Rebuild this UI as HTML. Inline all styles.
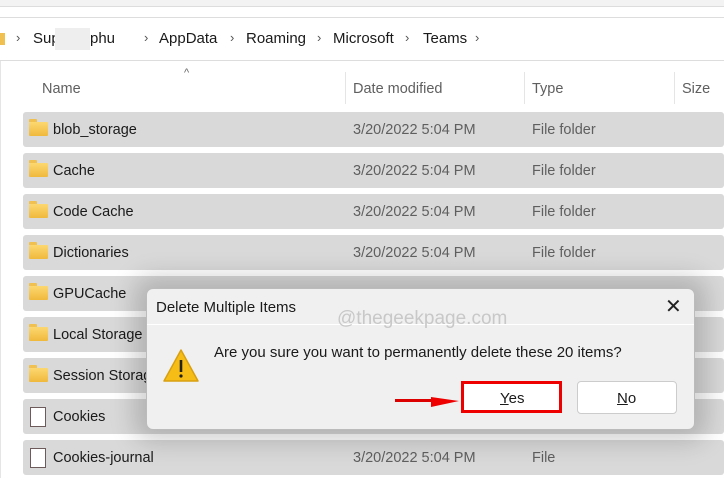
<!DOCTYPE html>
<html><head><style>
body{margin:0;width:724px;height:478px;overflow:hidden;background:#fff;font-family:"Liberation Sans",sans-serif;position:relative}
.a{position:absolute}
.row{position:absolute;left:23px;width:701px;height:35px;background:#d9d9d9;border-radius:3px;font-size:14.5px;color:#1a1a1a}
.row span{position:absolute;top:10px}
.g{color:#5f5f5f}
.fold{position:absolute;left:6px;top:10px;width:19px;height:14px;background:linear-gradient(#fcd770,#f0b93c);border-radius:1px}
.fold:before{content:"";position:absolute;left:0;top:-3px;width:8px;height:3px;background:#f0c050;border-radius:1px 1px 0 0}
.file{position:absolute;left:7px;top:8px;width:14px;height:18px;border:1px solid #6d5a5a;background:#fff}
.bc{font-size:15px;color:#1a1a1a;top:30px}
.ch{font-size:13px;color:#555;top:30px}
</style></head><body>
<div class="a" style="left:0;top:0;width:724px;height:6px;background:#f3f3f3;border-bottom:1px solid #ddd"></div>
<div class="a" style="left:0;top:17px;width:724px;height:1px;background:#ddd"></div>
<div class="a" style="left:0;top:60px;width:724px;height:1px;background:#ddd"></div>
<div class="a" style="left:0;top:33px;width:5px;height:12px;background:#f0c050"></div>
<span class="a ch" style="left:16px">›</span>
<span class="a bc" style="left:33px">Sup</span>
<div class="a" style="left:55px;top:28px;width:35px;height:22px;background:#eee"></div>
<span class="a bc" style="left:90px">phu</span>
<span class="a ch" style="left:144px">›</span><span class="a bc" style="left:159px">AppData</span>
<span class="a ch" style="left:230px">›</span><span class="a bc" style="left:246px">Roaming</span>
<span class="a ch" style="left:317px">›</span><span class="a bc" style="left:333px">Microsoft</span>
<span class="a ch" style="left:405px">›</span><span class="a bc" style="left:423px">Teams</span>
<span class="a ch" style="left:475px">›</span>
<div class="a" style="left:0;top:61px;width:1px;height:417px;background:#e5e5e5"></div>
<span class="a" style="left:184px;top:67px;font-size:11px;color:#666">^</span>
<span class="a g" style="left:42px;top:81px;font-size:14.5px">Name</span>
<div class="a" style="left:345px;top:72px;width:1px;height:32px;background:#e5e5e5"></div>
<span class="a g" style="left:353px;top:81px;font-size:14.5px">Date modified</span>
<div class="a" style="left:524px;top:72px;width:1px;height:32px;background:#e5e5e5"></div>
<span class="a g" style="left:532px;top:81px;font-size:14.5px">Type</span>
<div class="a" style="left:674px;top:72px;width:1px;height:32px;background:#e5e5e5"></div>
<span class="a g" style="left:682px;top:81px;font-size:14.5px">Size</span>

<div class="row" style="top:112px"><i class="fold"></i><span style="left:30px">blob_storage</span><span class="g" style="left:330px">3/20/2022 5:04 PM</span><span class="g" style="left:509px">File folder</span></div>
<div class="row" style="top:153px"><i class="fold"></i><span style="left:30px">Cache</span><span class="g" style="left:330px">3/20/2022 5:04 PM</span><span class="g" style="left:509px">File folder</span></div>
<div class="row" style="top:194px"><i class="fold"></i><span style="left:30px">Code Cache</span><span class="g" style="left:330px">3/20/2022 5:04 PM</span><span class="g" style="left:509px">File folder</span></div>
<div class="row" style="top:235px"><i class="fold"></i><span style="left:30px">Dictionaries</span><span class="g" style="left:330px">3/20/2022 5:04 PM</span><span class="g" style="left:509px">File folder</span></div>
<div class="row" style="top:276px"><i class="fold"></i><span style="left:30px">GPUCache</span></div>
<div class="row" style="top:317px"><i class="fold"></i><span style="left:30px">Local Storage</span></div>
<div class="row" style="top:358px"><i class="fold"></i><span style="left:30px">Session Storage</span></div>
<div class="row" style="top:399px"><i class="file"></i><span style="left:30px">Cookies</span></div>
<div class="row" style="top:440px"><i class="file"></i><span style="left:30px">Cookies-journal</span><span class="g" style="left:330px">3/20/2022 5:04 PM</span><span class="g" style="left:509px">File</span></div>

<div class="a" style="left:146px;top:288px;width:547px;height:140px;background:#f0f0f0;border:1px solid #bbb;border-radius:7px;box-shadow:0 0 25px 12px rgba(0,0,0,0.18)">
 <span class="a" style="left:9px;top:10px;font-size:15px;color:#1a1a1a">Delete Multiple Items</span>
 <span class="a" style="left:518px;top:5px;font-size:20px;color:#222">✕</span>
 <div class="a" style="left:0;top:35px;width:547px;height:1px;background:#fff"></div>
 <span class="a" style="left:190px;top:19px;font-size:19px;color:#c8c8c8">@thegeekpage.com</span>
 <svg class="a" style="left:15px;top:58px" width="38" height="38" viewBox="0 0 38 38"><path d="M19 3 L36 34 L2 34 Z" fill="#f6bd16" stroke="#d8a010" stroke-width="1.5" stroke-linejoin="round"/><rect x="17.7" y="13" width="2.6" height="12" fill="#222"/><circle cx="19" cy="29" r="1.6" fill="#222"/></svg>
 <span class="a" style="left:67px;top:55px;font-size:15px;color:#1a1a1a">Are you sure you want to permanently delete these 20 items?</span>
 <div class="a" style="left:248px;top:110px;width:50px;height:3px;background:#d00;"></div>
 <svg class="a" style="left:284px;top:102px" width="28" height="18"><path d="M0 6 L28 10 L0 16 Z" fill="#e00"/></svg>
 <div class="a" style="left:314px;top:92px;width:95px;height:26px;border:3px solid #e00;background:#fff"></div>
 <span class="a" style="left:353px;top:101px;font-size:15px;color:#1a1a1a"><u>Y</u>es</span>
 <div class="a" style="left:430px;top:92px;width:98px;height:31px;border:1px solid #ccc;border-radius:4px;background:#fff"></div>
 <span class="a" style="left:470px;top:101px;font-size:15px;color:#1a1a1a"><u>N</u>o</span>
</div>
</body></html>
